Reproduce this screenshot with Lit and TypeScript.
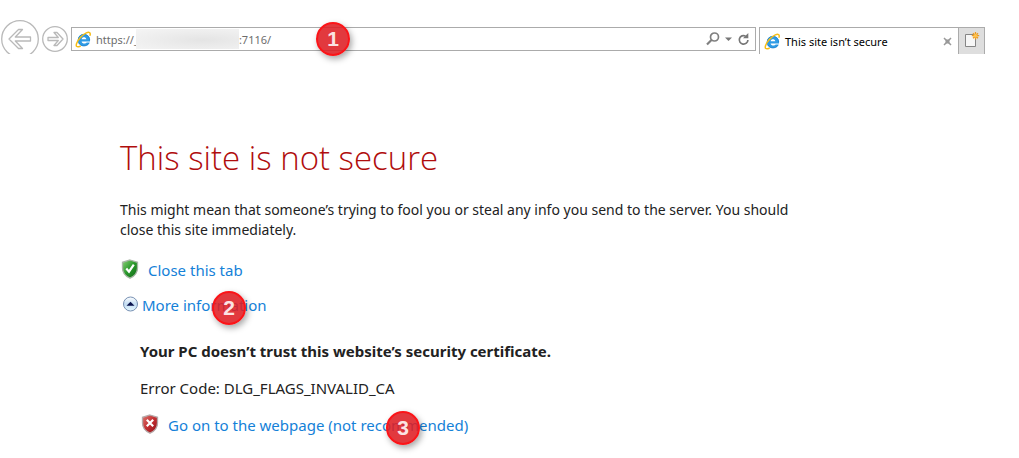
import { LitElement, html, css, svg } from "lit";
import { customElement, property } from "lit/decorators.js";

const browserLogo = svg`
  <path d="M2.800 9.200a6 6 0 0 1 12.200-.4v1.700H6.600c.400 2.400 4 2.700 5 .9h3.100c-1.700 5.400-11.900 4.600-11.900-2.200Z" fill="#2e9be6"/>
  <path d="M6.600 8.200c.500-2.600 4.200-2.600 4.700 0Z" fill="#fff"/>
  <path d="M3.300 9.300c.1-5.600 5.700-7.300 9.100-4.800 1.500 1.100 2.200 2.700 2.300 4.700M3.600 11.500c1.500 4.200 8 4.600 10.300.8" fill="none" stroke="#1b7fca" stroke-width=".8"/>
  <path d="M5.200 15.200C1.900 16.500.7 15.500 1.500 12.700 2.600 9 7.300 3.700 11.300 1.900c2.900-1.300 4.400-.4 3.800 2.300" fill="none" stroke="#f6bd17" stroke-width="1.500" stroke-linecap="round"/>`;

const shieldPath = "M9 1 16.500 3.300V9c0 5-3.200 8.300-7.500 10.200C4.700 17.300 1.500 14 1.500 9V3.300Z";

@customElement("step-badge")
export class StepBadge extends LitElement {
  @property() step = "";

  static styles = css`
    :host {
      box-sizing: border-box;
      width: 34px;
      height: 34px;
      display: flex;
      align-items: center;
      justify-content: center;
      border: 2px solid #fb1418;
      border-radius: 50%;
      background: rgba(222, 30, 35, 0.88);
      box-shadow: 2px 3px 6px rgba(0, 0, 0, 0.35);
      color: #fbe3e3;
      font: bold 21px/30px "Liberation Sans", Arial, sans-serif;
      pointer-events: none;
    }
  `;

  render() {
    return html`${this.step}`;
  }
}

@customElement("browser-bar")
export class BrowserBar extends LitElement {
  static styles = css`
    :host {
      display: block;
      font-family: "Noto Sans", "Open Sans", sans-serif;
      font-size: 11px;
    }
    .bar {
      display: flex;
      align-items: flex-start;
      height: 34px;
      padding: 20px 34px 0 1px;
    }
    button {
      padding: 0;
      border: 0;
      background: none;
      display: block;
    }
    svg {
      display: block;
      flex: none;
    }
    .back {
      width: 38px;
      height: 34px;
      overflow: hidden;
    }
    .forward {
      margin: 5px 3px 0 3px;
    }
    .address {
      position: relative;
      box-sizing: border-box;
      flex: 1;
      min-width: 0;
      height: 24px;
      margin-top: 7px;
      padding: 0 5px 0 3px;
      display: flex;
      align-items: center;
      border: 1px solid #ababab;
    }
    .url {
      flex: 1;
      min-width: 0;
      padding: 2px 0 0;
      margin-left: 4px;
      border: 0;
      outline: 0;
      background: none;
      color: #6d6d6d;
      font: 11px/20px "Noto Sans", "Open Sans", sans-serif;
    }
    .redacted {
      position: absolute;
      left: 64px;
      top: 1px;
      width: 103px;
      height: 20px;
      background: radial-gradient(ellipse at 65% 55%, #e4e4e4, #ececec 45%, #f5f5f5);
    }
    .badge {
      position: absolute;
      left: 244px;
      top: -6px;
    }
    .tools {
      display: flex;
      align-items: center;
      gap: 5px;
    }
    .tab {
      box-sizing: border-box;
      width: 200px;
      height: 27px;
      margin: 7px 0 0 3px;
      padding: 0 6px 0 4px;
      display: flex;
      align-items: center;
      gap: 4px;
      border: 1px solid #ababab;
      border-bottom: 0;
      color: #000;
    }
    .title {
      flex: 1;
      padding-top: 2px;
      white-space: nowrap;
    }
    .new {
      box-sizing: border-box;
      width: 27px;
      height: 27px;
      margin: 7px 0 0 -1px;
      padding: 0 0 2px 6px;
      border: 1px solid #ababab;
      border-bottom: 0;
      background: #dedede;
    }
  `;

  render() {
    return html`
      <nav class="bar" aria-label="Browser">
        <button class="back" aria-label="Back">
          <svg width="38" height="38" viewBox="0 0 38 38" fill="none" stroke="#b9b9b9" stroke-width="1.300">
            <circle cx="19" cy="19" r="18.300" />
            <path d="M8 19 17.500 9.500h4L14.300 17H29.500v4H14.300l7.200 7.500h-4Z" stroke-linejoin="round" />
          </svg>
        </button>
        <button class="forward" aria-label="Forward">
          <svg width="26" height="28" viewBox="0 0 26 28" fill="none" stroke="#b9b9b9" stroke-width="1.300">
            <circle cx="13" cy="14" r="12.300" />
            <path d="M21 14 15 7.500h-3l4.300 5H6v3h10.300l-4.300 5h3Z" stroke-linejoin="round" />
          </svg>
        </button>
        <div class="address">
          <svg width="17" height="17" viewBox="0 0 17 17">${browserLogo}</svg>
          <input class="url" aria-label="Address" .value=${"https://_" + "\u00a0".repeat(35) + ":7116/"} />
          <span class="redacted"></span>
          <div class="tools">
            <button aria-label="Search">
              <svg width="14" height="14" viewBox="0 0 14 14" fill="none" stroke="#808080">
                <circle cx="8.500" cy="5" r="4" stroke-width="1.700" />
                <path d="M5.700 7.800 1 12.500" stroke-width="2.200" />
              </svg>
            </button>
            <button aria-label="Address list">
              <svg width="7" height="14" viewBox="0 0 7 14"><path d="M0 5.500h7L3.500 9Z" fill="#777" /></svg>
            </button>
            <button aria-label="Refresh">
              <svg width="13" height="14" viewBox="0 0 13 14" fill="none" stroke="#777" stroke-width="1.700">
                <path d="M8.500 4A4.300 4.300 0 1 0 10.900 8" />
                <path d="M11.300 1v5.300H6Z" fill="#777" stroke="none" />
              </svg>
            </button>
          </div>
          <step-badge class="badge" step="1"></step-badge>
        </div>
        <div class="tab">
          <svg width="17" height="17" viewBox="0 0 17 17">${browserLogo}</svg>
          <span class="title">This site isn’t secure</span>
          <button aria-label="Close tab">
            <svg width="9" height="9" viewBox="0 0 9 9" stroke="#999" fill="none">
              <path d="m1 1 7 7M8 1 1 8" stroke-width="1.500" />
              <path d="M2.500 2.500h4v4h-4Z" fill="#999" stroke="none" />
            </svg>
          </button>
        </div>
        <button class="new" aria-label="New tab">
          <svg width="17" height="18" viewBox="0 0 17 18">
            <path d="M.5 3.500h10v12H.5Z" fill="#f6f6f6" stroke="#858585" />
            <path d="M10.500 1v7.400M6.800 4.700h7.400M8 2.200l5 5M13 2.200l-5 5" stroke="#ee9c20" stroke-width="1.300" />
            <circle cx="10.500" cy="4.700" r="1.800" fill="#ffc34d" />
          </svg>
        </button>
      </nav>
    `;
  }
}

@customElement("app-root")
export class AppRoot extends LitElement {
  static styles = css`
    :host {
      display: block;
      background: #fff;
      color: #222;
      font: 15px/20px "Noto Sans", "Open Sans", sans-serif;
    }
    main {
      max-width: 700px;
      padding: 82px 0 0 120px;
    }
    h1 {
      margin: 0;
      color: #b00d0d;
      font: 300 33px/44px "Open Sans", "Noto Sans", sans-serif;
    }
    p,
    h2 {
      margin: 0;
    }
    .lead {
      margin-top: 20px;
      font-size: 14px;
    }
    .row {
      display: flex;
      align-items: center;
      height: 20px;
    }
    .close {
      margin-top: 20px;
      gap: 8px;
    }
    .more {
      margin-top: 15px;
      gap: 3px;
    }
    .details {
      padding: 26px 0 20px 20px;
    }
    h2 {
      font-size: 15px;
      line-height: 20px;
    }
    .code {
      margin-top: 17px;
    }
    .proceed {
      margin-top: 17px;
      gap: 8px;
    }
    a {
      position: relative;
      color: #1481d8;
      text-decoration: none;
    }
    svg {
      display: block;
      flex: none;
    }
    .badge {
      position: absolute;
      top: -4px;
    }
    .over-more {
      left: 70px;
    }
    .over-proceed {
      left: 218px;
    }
  `;

  render() {
    return html`
      <browser-bar></browser-bar>
      <main>
        <h1>This site is not secure</h1>
        <p class="lead">
          This might mean that someone’s trying to fool you or steal any info you send to the server. You should close
          this site immediately.
        </p>
        <div class="row close">
          <svg width="20" height="22" viewBox="-1 0 20 22">
            <defs>
              <linearGradient id="green" x2="1" y2="1">
                <stop stop-color="#8bd277" />
                <stop offset=".5" stop-color="#28962a" />
                <stop offset="1" stop-color="#116a17" />
              </linearGradient>
            </defs>
            <path d=${shieldPath} fill="url(#green)" stroke="#a9b5a6" stroke-width="1.300" />
            <path d="m5.300 9.500 2.700 3.200 4.800-7" fill="none" stroke="#fff" stroke-width="2.200" />
          </svg>
          <a href="#close">Close this tab</a>
        </div>
        <div class="row more">
          <svg width="19" height="19" viewBox="0 0 19 19">
            <defs>
              <linearGradient id="blue" x2="0" y2="1">
                <stop stop-color="#fff" />
                <stop offset=".5" stop-color="#c3ddf3" />
                <stop offset="1" stop-color="#e4f8ff" />
              </linearGradient>
            </defs>
            <circle cx="10.500" cy="8" r="7" fill="url(#blue)" stroke="#7891b3" />
            <path d="M6.500 9.700 10.500 5.700l4 4Z" fill="#09124c" />
          </svg>
          <a href="#more">More information<step-badge class="badge over-more" step="2"></step-badge></a>
        </div>
        <section class="details">
          <h2>Your PC doesn’t trust this website’s security certificate.</h2>
          <p class="code">Error Code: DLG_FLAGS_INVALID_CA</p>
          <div class="row proceed">
            <svg width="20" height="22" viewBox="-1 0 20 22">
              <defs>
                <linearGradient id="red" x2="1" y2="1">
                  <stop stop-color="#dc7770" />
                  <stop offset=".5" stop-color="#c22e31" />
                  <stop offset="1" stop-color="#8d1118" />
                </linearGradient>
              </defs>
              <path d=${shieldPath} fill="url(#red)" stroke="#b5aaaa" stroke-width="1.300" />
              <path d="m5.800 5.800 6.400 6.400m0-6.400-6.400 6.400" fill="none" stroke="#fff" stroke-width="2.200" />
            </svg>
            <a href="#proceed"
              >Go on to the webpage (not recommended)<step-badge class="badge over-proceed" step="3"></step-badge
            ></a>
          </div>
        </section>
      </main>
    `;
  }
}
